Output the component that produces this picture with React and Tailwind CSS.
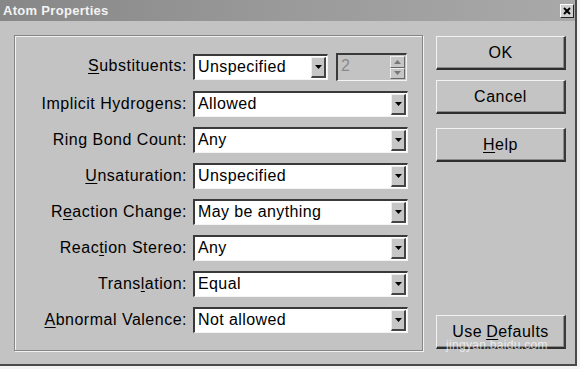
import React from 'react';

const rows = [
  { label: 'Substituents:', key: 'S', value: 'Unspecified' },
  { label: 'Implicit Hydrogens:', key: null, value: 'Allowed' },
  { label: 'Ring Bond Count:', key: null, value: 'Any' },
  { label: 'Unsaturation:', key: 'U', value: 'Unspecified' },
  { label: 'Reaction Change:', key: 'e', value: 'May be anything' },
  { label: 'Reaction Stereo:', key: 't', value: 'Any' },
  { label: 'Translation:', key: 'l', value: 'Equal' },
  { label: 'Abnormal Valence:', key: 'A', value: 'Not allowed' },
];

function Mnemonic({ text, ch }) {
  if (!ch) return <>{text}</>;
  const i = text.indexOf(ch);
  return (
    <>
      {text.slice(0, i)}
      <span className="underline underline-offset-[2px]">{text[i]}</span>
      {text.slice(i + 1)}
    </>
  );
}

function Arrow({ up, color = '#000' }) {
  return (
    <svg width="7" height="4" viewBox="0 0 7 4">
      <path d={up ? 'M0 4 L7 4 L3.5 0 Z' : 'M0 0 L7 0 L3.5 4 Z'} fill={color} />
    </svg>
  );
}

function Combo({ value, className = '' }) {
  return (
    <div className={`h-[26px] flex bg-white border-t-2 border-l-2 border-t-[#3a3a3a] border-l-[#3a3a3a] border-b border-r border-b-[#f4f4f4] border-r-[#f4f4f4] ${className}`}>
      <span className="flex-1 pl-[3px] text-[16px] leading-[22px] tracking-[0.4px] text-black whitespace-nowrap overflow-hidden">{value}</span>
      <div className="w-[15px] my-[1px] mr-[1px] flex items-center justify-center bg-[#c6c6c6] border-t border-l border-t-[#eee] border-l-[#eee] border-b-2 border-r-2 border-b-[#444] border-r-[#444]">
        <Arrow />
      </div>
    </div>
  );
}

function Spin() {
  return (
    <div className="w-[71px] h-[28px] flex bg-[#c3c3c3] border-t-2 border-l-2 border-t-[#3a3a3a] border-l-[#3a3a3a] border-b border-r border-b-[#f4f4f4] border-r-[#f4f4f4]">
      <span className="flex-1 pl-[3px] text-[16px] leading-[22px] text-[#8a8a8a]">2</span>
      <div className="w-[15px] flex flex-col mr-[1px] my-[1px]">
        <div className="flex-1 flex items-center justify-center bg-[#c6c6c6] border-t border-l border-t-[#eee] border-l-[#eee] border-b border-r border-b-[#666] border-r-[#666]">
          <Arrow up color="#777" />
        </div>
        <div className="flex-1 flex items-center justify-center bg-[#c6c6c6] border-t border-l border-t-[#eee] border-l-[#eee] border-b border-r border-b-[#666] border-r-[#666]">
          <Arrow color="#777" />
        </div>
      </div>
    </div>
  );
}

function Button({ children, className = '' }) {
  return (
    <div className={`h-[34px] w-[130px] flex items-center justify-center bg-[#c4c4c4] border-t border-l border-t-[#f2f2f2] border-l-[#f2f2f2] border-b-2 border-r-2 border-b-[#2e2e2e] border-r-[#3a3a3a] shadow-[inset_-1px_-1px_0_#8a8a8a] text-[16px] tracking-[0.5px] text-black ${className}`}>
      {children}
    </div>
  );
}

export default function App() {
  return (
    <div className="w-[580px] h-[369px] bg-[#f4f4f4] relative overflow-hidden font-['Liberation_Sans',Arial,sans-serif]">
      <div className="w-[577px] h-[366px] bg-[#c3c3c3] border-r-2 border-b-2 border-r-[#4a4a4a] border-b-[#4a4a4a]">
        {/* title bar */}
        <div className="h-[21px] flex items-center justify-between pl-[3px] pr-[1px] bg-gradient-to-r from-[#878787] via-[#9a9a9a] to-[#a9a9a9]">
          <span className="text-[13px] font-bold tracking-[0.3px] text-[#f3f3f3]">Atom Properties</span>
          <div className="w-[14px] h-[14px] flex items-center justify-center bg-[#d0d0d0] border-t border-l border-t-white border-l-white border-b border-r border-b-[#222] border-r-[#222]">
            <svg width="8" height="8" viewBox="0 0 8 8">
              <path d="M1 1 L7 7 M7 1 L1 7" stroke="#000" strokeWidth="2" />
            </svg>
          </div>
        </div>

        <div className="flex pl-[14px] pt-[14px]">
          {/* group box */}
          <div className="w-[409px] h-[316px] border border-[#858585] shadow-[inset_1px_1px_0_#f2f2f2,1px_1px_0_#f2f2f2] pt-[17px]">
            <div className="grid grid-cols-[172px_215px] gap-x-[6px] gap-y-[10px]">
              {rows.map((r, idx) => (
                <React.Fragment key={r.label}>
                  <div className="h-[26px] flex items-center justify-end text-[16px] tracking-[0.5px] text-black whitespace-nowrap">
                    <Mnemonic text={r.label} ch={r.key} />
                  </div>
                  {idx === 0 ? (
                    <div className="flex items-center gap-[8px]">
                      <Combo value={r.value} className="w-[135px]" />
                      <Spin />
                    </div>
                  ) : (
                    <Combo value={r.value} />
                  )}
                </React.Fragment>
              ))}
            </div>
          </div>

          {/* buttons */}
          <div className="ml-[13px] flex flex-col">
            <Button className="mt-[1px]">OK</Button>
            <Button className="mt-[10px]">Cancel</Button>
            <Button className="mt-[14px]">
              <Mnemonic text="Help" ch="H" />
            </Button>
            <Button className="mt-[153px]">
              Use <span className="ml-[4px] underline underline-offset-[2px]">D</span>efaults
            </Button>
          </div>
        </div>
      </div>

      {/* watermark */}
      <div className="absolute left-[446px] top-[336px] text-[12px] tracking-[0.3px] text-white/70 pointer-events-none">
        jingyan.baidu.com
      </div>
    </div>
  );
}
